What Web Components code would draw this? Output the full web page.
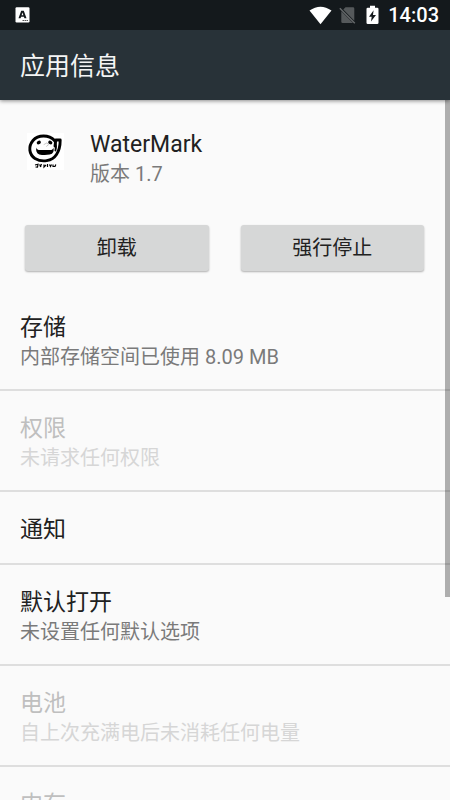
<!DOCTYPE html>
<html lang="zh-CN">
<head>
<meta charset="utf-8">
<meta name="viewport" content="width=device-width, initial-scale=1">
<title>应用信息</title>
<style>
  body { margin: 0; font-family: Roboto, "Noto Sans CJK SC", sans-serif; background: #fafafa; color: #212121; }
</style>
</head>
<body>
<app-screen>
  <status-bar slot="top" time="14:03"></status-bar>
  <title-bar slot="top">应用信息</title-bar>
  <app-summary>
    <span slot="name">WaterMark</span>
    <span slot="version">版本 1.7</span>
  </app-summary>
  <button-row>
    <raised-button>卸载</raised-button>
    <raised-button>强行停止</raised-button>
  </button-row>
  <setting-row>存储<span slot="summary">内部存储空间已使用 8.09 MB</span></setting-row>
  <setting-row disabled>权限<span slot="summary">未请求任何权限</span></setting-row>
  <setting-row>通知</setting-row>
  <setting-row>默认打开<span slot="summary">未设置任何默认选项</span></setting-row>
  <setting-row disabled>电池<span slot="summary">自上次充满电后未消耗任何电量</span></setting-row>
  <setting-row disabled>内存</setting-row>
</app-screen>
<script>
const define = (name, html) => customElements.define(name, class extends HTMLElement {
  constructor() {
    super();
    const template = document.createElement('template');
    template.innerHTML = html;
    this.attachShadow({ mode: 'open' }).append(template.content.cloneNode(true));
  }
  connectedCallback() {
    const time = this.shadowRoot.querySelector('time');
    if (time) time.textContent = this.getAttribute('time');
    const rowButton = this.shadowRoot.querySelector('button.row');
    if (rowButton) rowButton.disabled = this.hasAttribute('disabled');
  }
});

define('app-screen', `
  <style>
    :host { display: flex; flex-direction: column; height: 100vh; overflow: hidden; }
    header { flex: none; position: relative; z-index: 1; box-shadow: 0 1px 4px rgba(0,0,0,.45); }
    main { flex: 1; min-height: 0; position: relative; overflow: hidden; }
    .thumb { position: absolute; top: 0; right: 0; width: 5px; height: 71%; background: rgba(0,0,0,.3); }
  </style>
  <header><slot name="top"></slot></header>
  <main><slot></slot><div class="thumb"></div></main>
`);

define('status-bar', `
  <style>
    :host { display: flex; align-items: center; height: 30px; padding: 0 11px 0 15px; background: #14191c; color: #fff; }
    .right { display: flex; align-items: center; margin-left: auto; }
    svg { display: block; }
    .wifi { margin-right: 7px; }
    .sim { margin-right: 10px; }
    .battery { margin-right: 9px; }
    time { font-size: 20px; line-height: 30px; font-weight: 500; }
  </style>
  <svg width="15" height="16" viewBox="0 0 15 16"><rect x=".5" y=".3" width="14" height="15.2" rx="1.2" fill="#fff"/><path d="M3.5 11.200 6.200 3.800h2.600l2.700 7.400H9.400l-.5-1.500H6.100L5.600 11.200zM6.600 8.200h1.800L7.500 5.600z" fill="#14191c" fill-rule="evenodd"/><path d="M7.500 13.500h5.500" stroke="#555" stroke-width="1" stroke-dasharray="1.500 .5"/></svg>
  <div class="right">
    <svg class="wifi" width="23" height="19" viewBox="0 0 23 19"><path d="M.5 4.600Q11.500-3.200 22.500 4.600L11.500 18.300z" fill="#fff"/></svg>
    <svg class="sim" width="17" height="18" viewBox="0 0 17 18"><path d="M6.500 1.300H14q1.300 0 1.300 1.300v12.100L4.300 3.500zM2.300 5.200 14 17H3.500q-1.200 0-1.200-1.200z" fill="#55595b"/><path d="M.8 2.300 15.800 17.200" stroke="#66696b" stroke-width="1.400"/></svg>
    <svg class="battery" width="13" height="20" viewBox="0 0 13 20"><path d="M4 .8h5v2h2.200q1.300 0 1.300 1.300v13.700q0 1.300-1.300 1.300H1.800Q.5 19.100.5 17.800V4.100q0-1.300 1.300-1.300H4z" fill="#fff"/><path d="M7.600 5.300 3 11.700h2.700L5 16.500l5-6.500H7z" fill="#14191c"/></svg>
    <time></time>
  </div>
`);

define('title-bar', `
  <style>
    :host { display: block; padding: 3px 20px 0; background: #283238; color: #f4f5f5; }
    h1 { margin: 0; font-size: 25px; line-height: 67px; font-weight: 400; }
  </style>
  <h1><slot></slot></h1>
`);

define('app-summary', `
  <style>
    :host { display: flex; align-items: flex-start; gap: 26px; padding: 29px 27px 35px; }
    svg { flex: none; display: block; background: #fff; margin-top: 4px; }
    .name { font-size: 23px; line-height: 31px; }
    .version { font-size: 20px; line-height: 28px; color: #7a7a7a; }
  </style>
  <svg width="37" height="37" viewBox="0 0 37 37" role="img" aria-label="WaterMark">
    <g fill="none" stroke="#000" stroke-linecap="round" stroke-linejoin="round">
      <path d="M27.500 7.500C22 1.500 11 1.500 6 7.500 1 13.500 2 21.500 8 25.500c7 4 17 3 21.500-4 2.700-4 3.700-9.500 3.700-14.500h-4.400l-.8 6" stroke-width="2.900"/>
      <path d="M27.600 8.500q2.400 4.500.8 9" stroke-width="1.800"/>
      <path d="M17 11.500l3-1.700 1.500 2-2 1.500" stroke="#bbb" stroke-width=".8"/>
    </g>
    <ellipse cx="11.800" cy="9.500" rx="2.200" ry="1.700" transform="rotate(-30 11.800 9.500)"/>
    <ellipse cx="23.300" cy="9.500" rx="2.200" ry="1.700" transform="rotate(30 23.300 9.500)"/>
    <path d="M9.400 14.400Q10 17 13 17h10q3 0 3.300-2.600 1.700 5.800-3.600 7.200-5.700 1-10.400-.2-4-1.800-2.900-7z"/>
    <path d="M8 32l3-.8-.5 3-2-.2M12.500 31.500l1.500 2.500M14.500 31l-1.300 3M17 31.500v2.500l2-2M20.500 31v3M22.500 31.500l1 2 1-2M26 31.500v2h2l.8-2" fill="none" stroke="#000" stroke-width="1.200"/>
  </svg>
  <div>
    <div class="name"><slot name="name"></slot></div>
    <div class="version"><slot name="version"></slot></div>
  </div>
`);

define('button-row', `
  <style>
    :host { display: grid; grid-template-columns: 1fr 1fr; gap: 32px; padding: 2px 26px 19px 25px; }
  </style>
  <slot></slot>
`);

define('raised-button', `
  <style>
    :host { display: block; }
    button { display: block; width: 100%; height: 46px; margin: 0; padding: 1px 0 0; border: 0; border-radius: 3px; background: #d6d7d7; color: #212121; font: 400 20px/45px Roboto, "Noto Sans CJK SC", sans-serif; box-shadow: 0 1px 2px rgba(0,0,0,.3); }
  </style>
  <button type="button"><slot></slot></button>
`);

define('setting-row', `
  <style>
    :host { display: block; border-bottom: 2px solid #dedede; }
    button { display: block; width: 100%; margin: 0; padding: 22px 20px 18px; border: 0; background: none; text-align: left; font-family: inherit; color: #212121; }
    span { display: block; }
    .title { font-size: 23px; line-height: 31px; }
    .summary { font-size: 20px; color: #7a7a7a; }
    .summary ::slotted(*) { display: block; line-height: 28px; }
    button:disabled .title { color: #bfbfbf; }
    button:disabled .summary { color: #d6d6d6; }
  </style>
  <button class="row" type="button"><span class="title"><slot></slot></span><span class="summary"><slot name="summary"></slot></span></button>
`);
</script>
</body>
</html>
